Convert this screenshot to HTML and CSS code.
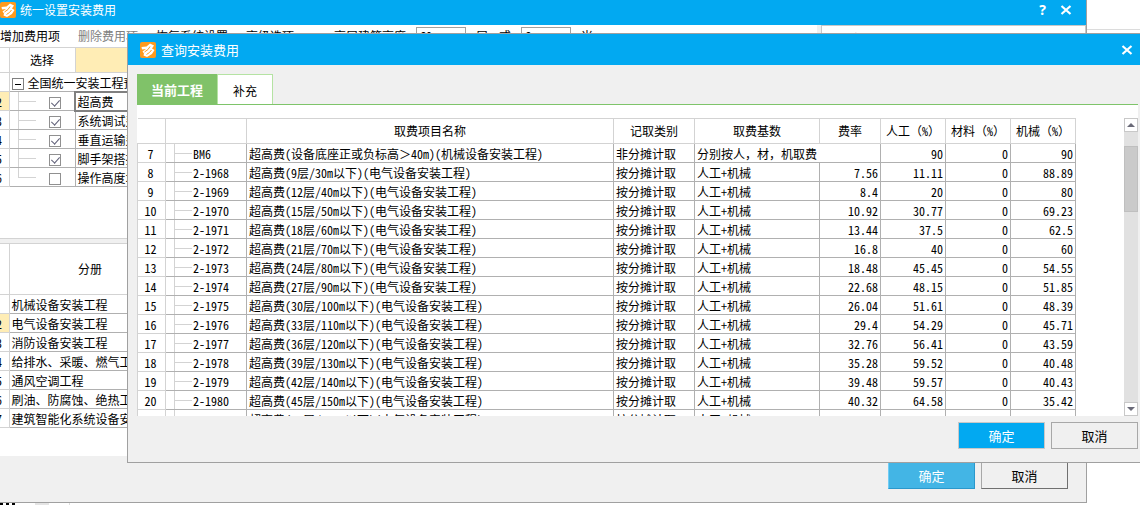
FILE: index.html
```html
<!DOCTYPE html>
<html lang="zh-CN">
<head>
<meta charset="utf-8">
<title>查询安装费用</title>
<link rel="stylesheet" href="styles.css">
</head>
<body>
<svg class="defs" aria-hidden="true">
  <symbol id="logo" viewBox="0 0 16 16">
    <rect width="16" height="16" rx="2" fill="#ff9a1e"/>
    <path d="M1.500 5 L6.500 4.500 L10 1.500 L14 3.500 L12 6.500 L14.500 8 L12 12 L7 15 L3.500 13.500 L4 11.500 L2.500 9.500 L6 7 L2 7.500Z" fill="#fff"/>
    <path d="M4.500 10 L8 7.500 L10 4.500 M6.500 12.500 L9.500 10.500 L11.500 8" fill="none" stroke="#ff9a1e" stroke-width="1"/>
  </symbol>
  <symbol id="close" viewBox="0 0 12 10"><path d="M1.500 1 L10.500 9 M10.500 1 L1.500 9" stroke="#fff" stroke-width="2.200" fill="none"/></symbol>
  <symbol id="up" viewBox="0 0 8 4"><path d="M0 4 L4 0 L8 4Z"/></symbol>
  <symbol id="down" viewBox="0 0 8 4"><path d="M0 0 L4 4 L8 0Z"/></symbol>
</svg>

<main class="window">
  <header class="titlebar">
    <svg class="logo"><use href="#logo"/></svg>
    <h1>统一设置安装费用</h1>
    <button class="tool help" aria-label="帮助">?</button>
    <button class="tool" aria-label="关闭"><svg class="x"><use href="#close"/></svg></button>
  </header>
  <div class="upper">
    <nav class="toolbar">
      <button>增加费用项</button>
      <button class="muted">删除费用项</button>
      <button>恢复系统设置</button>
      <button>高级选项</button>
      <label for="floors">高层建筑高度</label>
      <span class="spin"><input id="floors" value="60"><svg><use href="#up"/></svg></span>
      <span>层</span><label for="metres">或</label>
      <span class="spin"><input id="metres" value="6"><svg><use href="#up"/></svg></span>
      <span>米</span>
    </nav>
    <aside class="note">单项定额安装高度</aside>
  </div>
  <table class="grid fees">
    <colgroup><col class="c-row"><col class="c-pick"><col></colgroup>
    <thead><tr><th></th><th>选择</th><th class="lit"></th></tr></thead>
    <tbody>
      <tr><td class="num"></td><td class="group" colspan="2"><span class="fold"></span>全国统一安装工程预算定额</td></tr>
      <tr><td class="num lit">2</td><td class="branch"><input type="checkbox" checked aria-label="超高费"></td><td class="chosen">超高费</td></tr>
      <tr><td class="num">3</td><td class="branch"><input type="checkbox" checked aria-label="系统调试费"></td><td>系统调试费</td></tr>
      <tr><td class="num">4</td><td class="branch"><input type="checkbox" checked aria-label="垂直运输费"></td><td>垂直运输费</td></tr>
      <tr><td class="num">5</td><td class="branch"><input type="checkbox" checked aria-label="脚手架搭拆费"></td><td>脚手架搭拆费</td></tr>
      <tr><td class="num">6</td><td class="branch last"><input type="checkbox" aria-label="操作高度增加费"></td><td>操作高度增加费</td></tr>
    </tbody>
  </table>
  <div class="splitter"></div>
  <table class="grid books">
    <colgroup><col class="c-row"><col class="c-book"><col></colgroup>
    <thead><tr><th></th><th>分册</th><th></th></tr></thead>
    <tbody>
      <tr><td class="num"></td><td>机械设备安装工程</td><td></td></tr>
      <tr><td class="num lit">2</td><td>电气设备安装工程</td><td></td></tr>
      <tr><td class="num">3</td><td>消防设备安装工程</td><td></td></tr>
      <tr><td class="num">4</td><td class="wide">给排水、采暖、燃气工程</td><td></td></tr>
      <tr><td class="num">5</td><td>通风空调工程</td><td></td></tr>
      <tr><td class="num">6</td><td class="wide">刷油、防腐蚀、绝热工程</td><td></td></tr>
      <tr><td class="num">7</td><td>建筑智能化系统设备安装</td><td></td></tr>
    </tbody>
  </table>
  <footer class="actions back">
    <button class="ok">确定</button>
    <button>取消</button>
  </footer>
</main>

<section class="dialog" role="dialog" aria-labelledby="dialog-title">
  <header class="titlebar">
    <svg class="logo"><use href="#logo"/></svg>
    <h2 id="dialog-title">查询安装费用</h2>
    <button class="tool" aria-label="关闭"><svg class="x"><use href="#close"/></svg></button>
  </header>
  <div class="tabs" role="tablist">
    <button class="tab active" role="tab" aria-selected="true">当前工程</button>
    <button class="tab" role="tab" aria-selected="false">补充</button>
  </div>
  <div class="panel">
    <div class="viewport">
      <table class="grid query">
        <colgroup><col class="q-no"><col class="q-code"><col><col class="q-kind"><col class="q-base"><col class="q-rate"><col class="q-pct"><col class="q-pct"><col class="q-pct"></colgroup>
        <thead><tr><th></th><th></th><th>取费项目名称</th><th>记取类别</th><th>取费基数</th><th>费率</th><th class="pct">人工<span class="wide">（</span>%<span class="wide">）</span></th><th class="pct">材料<span class="wide">（</span>%<span class="wide">）</span></th><th class="pct">机械<span class="wide">（</span>%<span class="wide">）</span></th></tr></thead>
        <tbody>
          <tr><td>7</td><td>BM6</td><td>超高费(设备底座正或负标高<span class="wide">＞</span>40m)(机械设备安装工程)</td><td>非分摊计取</td><td colspan="2" class="wide">分别按人，材，机取费</td><td>90</td><td>0</td><td>90</td></tr>
          <tr><td>8</td><td>2-1968</td><td>超高费(9层/30m以下)(电气设备安装工程)</td><td>按分摊计取</td><td>人工+机械</td><td>7.56</td><td>11.11</td><td>0</td><td>88.89</td></tr>
          <tr><td>9</td><td>2-1969</td><td>超高费(12层/40m以下)(电气设备安装工程)</td><td>按分摊计取</td><td>人工+机械</td><td>8.4</td><td>20</td><td>0</td><td>80</td></tr>
          <tr><td>10</td><td>2-1970</td><td>超高费(15层/50m以下)(电气设备安装工程)</td><td>按分摊计取</td><td>人工+机械</td><td>10.92</td><td>30.77</td><td>0</td><td>69.23</td></tr>
          <tr><td>11</td><td>2-1971</td><td>超高费(18层/60m以下)(电气设备安装工程)</td><td>按分摊计取</td><td>人工+机械</td><td>13.44</td><td>37.5</td><td>0</td><td>62.5</td></tr>
          <tr><td>12</td><td>2-1972</td><td>超高费(21层/70m以下)(电气设备安装工程)</td><td>按分摊计取</td><td>人工+机械</td><td>16.8</td><td>40</td><td>0</td><td>60</td></tr>
          <tr><td>13</td><td>2-1973</td><td>超高费(24层/80m以下)(电气设备安装工程)</td><td>按分摊计取</td><td>人工+机械</td><td>18.48</td><td>45.45</td><td>0</td><td>54.55</td></tr>
          <tr><td>14</td><td>2-1974</td><td>超高费(27层/90m以下)(电气设备安装工程)</td><td>按分摊计取</td><td>人工+机械</td><td>22.68</td><td>48.15</td><td>0</td><td>51.85</td></tr>
          <tr><td>15</td><td>2-1975</td><td>超高费(30层/100m以下)(电气设备安装工程)</td><td>按分摊计取</td><td>人工+机械</td><td>26.04</td><td>51.61</td><td>0</td><td>48.39</td></tr>
          <tr><td>16</td><td>2-1976</td><td>超高费(33层/110m以下)(电气设备安装工程)</td><td>按分摊计取</td><td>人工+机械</td><td>29.4</td><td>54.29</td><td>0</td><td>45.71</td></tr>
          <tr><td>17</td><td>2-1977</td><td>超高费(36层/120m以下)(电气设备安装工程)</td><td>按分摊计取</td><td>人工+机械</td><td>32.76</td><td>56.41</td><td>0</td><td>43.59</td></tr>
          <tr><td>18</td><td>2-1978</td><td>超高费(39层/130m以下)(电气设备安装工程)</td><td>按分摊计取</td><td>人工+机械</td><td>35.28</td><td>59.52</td><td>0</td><td>40.48</td></tr>
          <tr><td>19</td><td>2-1979</td><td>超高费(42层/140m以下)(电气设备安装工程)</td><td>按分摊计取</td><td>人工+机械</td><td>39.48</td><td>59.57</td><td>0</td><td>40.43</td></tr>
          <tr><td>20</td><td>2-1980</td><td>超高费(45层/150m以下)(电气设备安装工程)</td><td>按分摊计取</td><td>人工+机械</td><td>40.32</td><td>64.58</td><td>0</td><td>35.42</td></tr>
          <tr><td></td><td></td><td>超高费(48层/160m以下)(电气设备安装工程)</td><td>按分摊计取</td><td>人工+机械</td><td></td><td></td><td></td><td></td></tr>
        </tbody>
      </table>
    </div>
    <div class="scrollbar">
      <button aria-label="向上滚动"><svg><use href="#up"/></svg></button>
      <div class="track"><div class="thumb"></div></div>
      <button aria-label="向下滚动"><svg><use href="#down"/></svg></button>
    </div>
  </div>
  <footer class="actions">
    <button class="ok">确定</button>
    <button>取消</button>
  </footer>
</section>
</body>
</html>
```

FILE: styles.css
```css
* { box-sizing: border-box; }
body {
  margin: 0;
  height: 100vh;
  overflow: hidden;
  position: relative;
  background:
    linear-gradient(#dcdcdc, #dcdcdc) 0 29px / 100% 1px no-repeat,
    repeating-linear-gradient(90deg, #000 0 3px, #fff 3px 6px) 0 100% / 18px 2px no-repeat,
    linear-gradient(#e4e4e4, #e4e4e4) 35px 100% / 14px 2px no-repeat,
    linear-gradient(#dcdcdc, #dcdcdc) 69px 100% / 1px 2px no-repeat,
    #fff;
  font: 12px/16px "Noto Sans CJK SC", sans-serif;
  font-feature-settings: "hwid";
  color: #000;
}
button, input { font: inherit; font-feature-settings: inherit; color: inherit; margin: 0; padding: 0; border: 0; background: none; }
h1, h2 { margin: 0; font-weight: 400; flex: 1; }
h1 { font-size: 12px; }
h2 { font-size: 13px; }
.wide { font-feature-settings: normal; }
.defs { position: absolute; width: 0; height: 0; }

.window {
  display: flex;
  flex-direction: column;
  height: calc(100vh - 2px);
  margin-right: 53px;
  background: #fff;
  border: solid #a0a0a0;
  border-width: 0 1px 1px 0;
}
.titlebar { display: flex; align-items: center; background: #02a9f1; color: #fff; }
.window > .titlebar { flex: 0 0 25px; padding: 0 14px 6px 0; }
.logo { width: 16px; height: 16px; margin-right: 4px; }
.tool { display: flex; }
.help { font: bold 14px/16px "Noto Sans", sans-serif; margin-right: 14px; }
.x { width: 12px; height: 10px; }

.upper { display: flex; flex: none; height: 22px; background: #fff; }
.toolbar { flex: 1; display: flex; align-items: center; white-space: nowrap; overflow: hidden; border-right: 4px solid #f0f0f0; }
.toolbar button { margin-right: 18px; }
.toolbar button:nth-child(4) { margin-right: 40px; }
.toolbar .muted { color: #808080; }
.toolbar label { margin-right: 10px; }
.toolbar span + label { margin-left: 11px; }
.spin { display: flex; align-items: center; width: 50px; height: 18px; margin-right: 10px; padding: 0 5px 0 3px; border: 1px solid #a0a0a0; }
.spin input { width: 100%; }
.spin svg { flex: none; width: 6px; height: 10px; fill: #6a6a78; }
.note { flex: 0 0 265px; padding: 5px 4px 0; border: 1px solid #c8c8c8; border-bottom: 0; }

.grid { border-collapse: collapse; table-layout: fixed; width: 100%; }
.grid th { font-weight: 400; border: 1px solid #d3d3d3; padding: 0; white-space: nowrap; }
.grid td { height: 19px; padding: 2px 2px 0; border: 1px solid #b0b0b0; line-height: 16px; overflow: hidden; white-space: nowrap; }
.window .grid { flex: none; }
.window .grid th:first-child, .window .grid td:first-child { border-left: 0; }
.c-row { width: 9px; }
.c-pick { width: 66px; }
.c-book { width: 162px; }
.fees th { height: 25px; }
.books th { height: 51px; }
.grid .num { padding: 2px 0 0; text-indent: -4px; border-color: #d3d3d3; }
.lit { background: #ffedb5; }
.fold { display: inline-block; width: 12px; height: 12px; margin-right: 4px; vertical-align: -2px; border: 1px solid #808080; background: linear-gradient(#000, #000) center / 6px 1px no-repeat; }
.grid .branch {
  text-align: center;
  padding: 3px 0 0 25px;
  line-height: 12px;
  background: linear-gradient(#d3d3d3, #d3d3d3) 8px 0 / 1px 100% no-repeat, linear-gradient(#d3d3d3, #d3d3d3) 8px 9px / 18px 1px no-repeat;
}
.grid .branch.last { background-size: 1px 9px, 18px 1px; }
.branch input { appearance: none; display: inline-block; width: 12px; height: 12px; border: 1px solid #909090; vertical-align: top; position: relative; }
.branch input:checked::after { content: ""; position: absolute; left: 3px; top: 0; width: 4px; height: 7px; border: solid #606078; border-width: 0 1px 1px 0; transform: rotate(42deg); }
.chosen { outline: 2px solid #808080; outline-offset: -1px; }
.splitter { flex: none; height: 5px; margin-top: 51px; background: #f0f0f0; border-top: 1px solid #d3d3d3; }

.actions { display: flex; justify-content: flex-end; align-items: flex-start; gap: 6px; background: #f0f0f0; }
.actions button { width: 87px; height: 27px; border: 1px solid #a8a8a8; font-size: 13px; }
.actions .ok { background: #02a9f1; color: #fff; border-color: #c8c8c8; }
.back { flex: 0 0 46px; margin-top: auto; padding: 6px 18px 0; }
.back button { border-color: #a8a8a8 #707070 #707070 #a8a8a8; }
.back .ok { background: #43b5e5; border-color: #70ccf5 #2a98cc #2a98cc #70ccf5; }

.dialog {
  position: absolute;
  inset: 33px 0 42px 127px;
  display: flex;
  flex-direction: column;
  background: #f0f0f0;
  border: solid #a0a0a0;
  border-width: 1px 0 1px 1px;
}
.dialog > .titlebar { flex: 0 0 31px; padding: 0 7px 0 12px; }
.dialog .logo { margin-right: 5px; }
.tabs { display: flex; flex: 0 0 31px; margin: 9px 2px 0 9px; border-bottom: 1px solid #7ec46a; }
.tab { width: 56px; padding-top: 3px; background: #fff; border: 1px solid #b5e3a3; border-bottom: 0; }
.tab.active { width: 80px; padding: 2px 0 0; background: #80c269; border: 0; color: #fff; font-size: 13px; font-weight: 700; }
.panel { flex: 1; min-height: 0; display: flex; justify-content: space-between; margin: 0 2px 0 9px; padding-top: 13px; background: #fff; }
.viewport { flex: 1; margin-right: 48px; overflow: hidden; }
.query th { height: 25px; }
.query th:first-child { border-left: 0; }
.query .pct { padding-left: 5px; text-align: left; }
.q-no { width: 28px; }
.q-code { width: 81px; }
.q-kind { width: 81px; }
.q-base { width: 125px; }
.q-rate { width: 61px; }
.q-pct { width: 65px; }
.query td:first-child { text-align: center; border-color: #d3d3d3; padding-right: 4px; }
.query td:nth-child(2) {
  padding-left: 27px;
  background: linear-gradient(#d3d3d3, #d3d3d3) 8px 0 / 1px 100% no-repeat, linear-gradient(#d3d3d3, #d3d3d3) 8px 9px / 18px 1px no-repeat;
}
.query td:nth-last-child(-n+3), .query td:nth-child(6):nth-last-child(4) { text-align: right; }
.scrollbar { display: flex; flex-direction: column; width: 14px; background: #e1e1e1; }
.scrollbar button { display: flex; align-items: center; justify-content: center; height: 14px; background: #fff; border: 1px solid #c8c8c8; }
.scrollbar svg { width: 8px; height: 4px; fill: #6a6a78; }
.track { flex: 1; padding-top: 14px; }
.thumb { height: 66px; background: #cacaca; border: 1px solid #bfbfbf; }
.dialog > .actions { flex: 0 0 46px; padding: 6px 2px 0; }
```
